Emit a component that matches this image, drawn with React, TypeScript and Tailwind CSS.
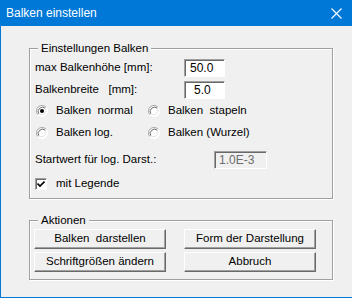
const font = { fontFamily: '"Liberation Sans", Arial, sans-serif' };

function Radio({ checked }: { checked?: boolean }) {
  return (
    <svg width="12" height="12" viewBox="0 0 12 12" className="shrink-0">
      <circle cx="6" cy="6" r="5.5" fill="#fff" />
      <path d="M10.2 2.4 A5.5 5.5 0 0 0 1.8 9.6" fill="none" stroke="#a0a0a0" />
      <path d="M9.3 3.2 A4.4 4.4 0 0 0 2.7 8.8" fill="none" stroke="#696969" />
      <path d="M1.8 9.6 A5.5 5.5 0 0 0 10.2 2.4" fill="none" stroke="#ffffff" />
      <path d="M2.7 8.8 A4.4 4.4 0 0 0 9.3 3.2" fill="none" stroke="#e3e3e3" />
      {checked && <circle cx="6" cy="6" r="2" fill="#000" />}
    </svg>
  );
}

function Field({ value, pl, disabled, w = "w-[41px]" }: { value: string; pl: string; disabled?: boolean; w?: string }) {
  return (
    <div
      className={`${w} h-[18px] border border-t-[#a0a0a0] border-l-[#a0a0a0] border-b-white border-r-white shadow-[inset_1px_1px_0_#696969] flex items-center text-[12px] ${pl} ${
        disabled ? "bg-[#f0f0f0] text-[#6d6d6d]" : "bg-white text-black"
      }`}
    >
      {value}
    </div>
  );
}

function Button({ label }: { label: string }) {
  return (
    <button className="w-[132px] h-[20px] bg-[#f0f0f0] border border-t-white border-l-white border-b-[#696969] border-r-[#696969] shadow-[inset_-1px_-1px_0_#a0a0a0] text-[11.5px] text-black whitespace-pre flex items-center justify-center leading-none">
      {label}
    </button>
  );
}

export default function App() {
  return (
    <div className="w-[352px] h-[298px] bg-[#f0f0f0] border-l border-b border-[#0078d7] flex flex-col text-black" style={font}>
      {/* title bar */}
      <div className="h-[26px] bg-[#0078d7] flex items-center justify-between pl-[5px] pr-[10px] text-white text-[12px]">
        <span>Balken einstellen</span>
        <svg width="11" height="11" viewBox="0 0 11 11">
          <path d="M0.5 0.5 L10.5 10.5 M10.5 0.5 L0.5 10.5" stroke="#fff" strokeWidth="1.1" />
        </svg>
      </div>

      {/* Einstellungen Balken */}
      <div className="relative mt-[22px] ml-[28px] w-[304px] h-[151px] border border-[#a0a0a0] shadow-[1px_1px_0_#fff,inset_1px_1px_0_#fff] flex flex-col pl-[5px] pt-[10px] text-[11.5px]">
        <span className="absolute left-[8px] top-[-8px] px-[3px] bg-[#f0f0f0] leading-[14px]">Einstellungen Balken</span>

        <div className="h-[18px] flex items-center">
          <span className="w-[149px]">max Balkenhöhe [mm]:</span>
          <Field value="50.0" pl="pl-[5px]" />
        </div>
        <div className="h-[18px] mt-[4px] flex items-center">
          <span className="w-[149px] whitespace-pre">Balkenbreite   [mm]:</span>
          <Field value="5.0" pl="pl-[9px]" />
        </div>

        <div className="h-[22px] mt-[1px] flex items-center pl-[1px]">
          <div className="w-[112px] flex items-center gap-[8px]">
            <Radio checked />
            <span className="whitespace-pre">Balken  normal</span>
          </div>
          <div className="flex items-center gap-[8px]">
            <Radio />
            <span className="whitespace-pre">Balken  stapeln</span>
          </div>
        </div>
        <div className="h-[22px] flex items-center pl-[1px]">
          <div className="w-[112px] flex items-center gap-[8px]">
            <Radio />
            <span>Balken log.</span>
          </div>
          <div className="flex items-center gap-[8px]">
            <Radio />
            <span>Balken (Wurzel)</span>
          </div>
        </div>

        <div className="h-[18px] mt-[7px] flex items-center">
          <span className="w-[179px]">Startwert für log. Darst.:</span>
          <Field value="1.0E-3" pl="pl-[4px]" disabled w="w-[53px]" />
        </div>

        <div className="h-[22px] mt-[4px] flex items-center gap-[9px]">
          <div className="w-[12px] h-[12px] bg-white border border-t-[#a0a0a0] border-l-[#a0a0a0] border-b-white border-r-white shadow-[inset_1px_1px_0_#696969] flex items-center justify-center">
            <svg width="8" height="8" viewBox="0 0 8 8">
              <path d="M0.5 3.5 L3 6 L7.5 1.5" fill="none" stroke="#000" strokeWidth="1.6" />
            </svg>
          </div>
          <span>mit Legende</span>
        </div>
      </div>

      {/* Aktionen */}
      <div className="relative mt-[21px] ml-[28px] w-[304px] h-[60px] border border-[#a0a0a0] shadow-[1px_1px_0_#fff,inset_1px_1px_0_#fff] text-[11.5px] pl-[4px] pt-[8px]">
        <span className="absolute left-[8px] top-[-8px] px-[3px] bg-[#f0f0f0] leading-[14px]">Aktionen</span>
        <div className="grid grid-cols-[132px_132px] gap-x-[18px] gap-y-[3px]">
          <Button label="Balken  darstellen" />
          <Button label="Form der Darstellung" />
          <Button label="Schriftgrößen ändern" />
          <Button label="Abbruch" />
        </div>
      </div>
    </div>
  );
}
